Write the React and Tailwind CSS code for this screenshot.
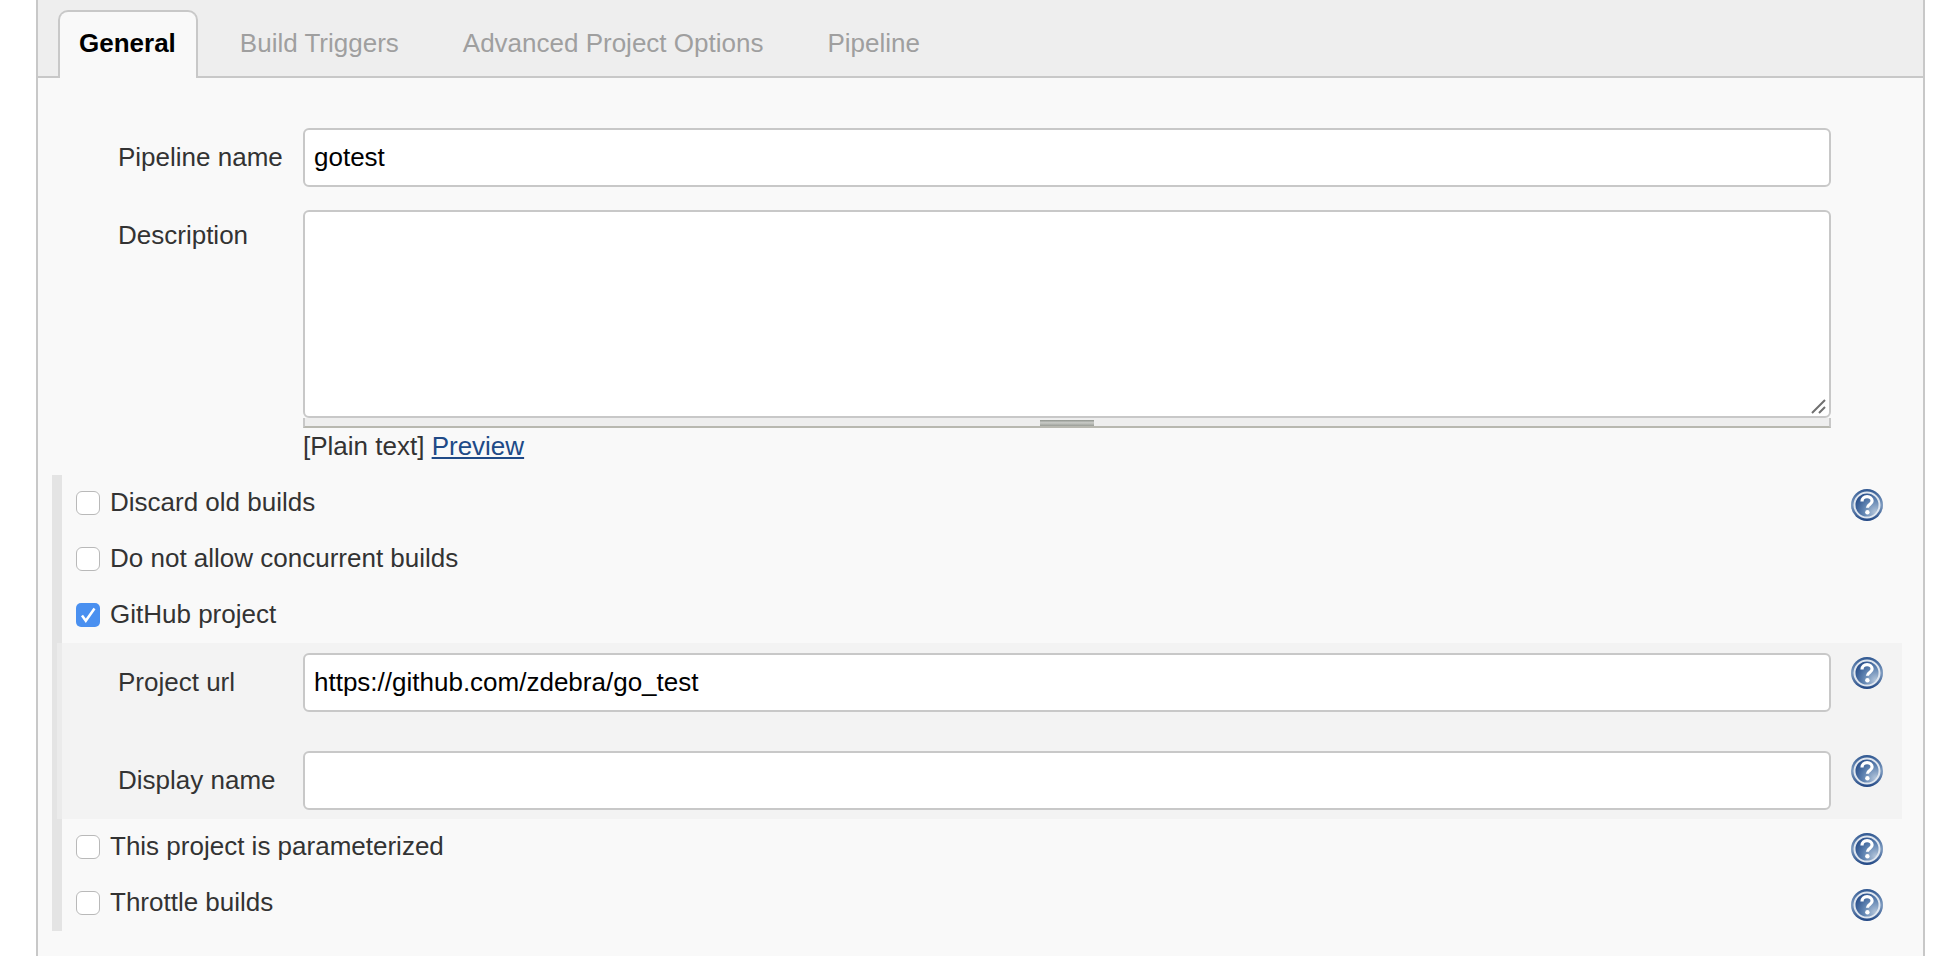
const FONT = "font-['Liberation_Sans',Arial,sans-serif]"

// Round blue help button
function HelpIcon() {
  return (
    <svg width="32" height="32" viewBox="0 0 32 32" className="block">
      <defs>
        <radialGradient id="helpFill" cx="0.85" cy="0.8" r="1">
          <stop offset="0" stopColor="#b4c6db" />
          <stop offset="0.5" stopColor="#5f83b1" />
          <stop offset="1" stopColor="#1f4583" />
        </radialGradient>
        <linearGradient id="helpEdge" x1="0" y1="0" x2="0" y2="1">
          <stop offset="0" stopColor="#2f5791" />
          <stop offset="0.5" stopColor="#7f9cc0" />
          <stop offset="1" stopColor="#1f4583" />
        </linearGradient>
      </defs>
      <circle cx="16" cy="16" r="16" fill="url(#helpEdge)" />
      <circle cx="16" cy="16" r="12.5" fill="url(#helpFill)" stroke="#dfe6ef" strokeWidth="2" />
      <path d="M11 12.5c0-3 2.200-4.800 5.100-4.800 2.900 0 5 1.800 5 4.300 0 3.500-4.700 3.500-4.700 6.800" fill="none" stroke="#fff" strokeWidth="3.200" />
      <circle cx="16.400" cy="23.300" r="2.200" fill="#fff" />
    </svg>
  )
}

function Checkbox({ checked }) {
  if (checked) {
    return (
      <span className="flex w-6 h-6 shrink-0 items-center justify-center rounded-[5px] bg-[#4a90f0]">
        <svg width="16" height="16" viewBox="0 0 16 16">
          <path d="M2 8.500l3.800 5.300L14.500 1.500" fill="none" stroke="#fff" strokeWidth="2.500" />
        </svg>
      </span>
    )
  }
  return <span className="block w-6 h-6 shrink-0 rounded-[6px] border border-[#b9b9b9] bg-white" />
}

function CheckRow({ label, checked, help, iconOffset }) {
  return (
    <div className="flex items-center h-[56px] pl-[14px] pr-[40px]">
      <Checkbox checked={checked} />
      <span className="ml-[10px] -mt-[2px] text-[26px] text-[#333]">{label}</span>
      {help && (
        <span className={`ml-auto ${iconOffset}`}>
          <HelpIcon />
        </span>
      )}
    </div>
  )
}

function TextInput({ value }) {
  return (
    <input
      readOnly
      value={value}
      className="w-[1528px] h-[59px] rounded-[6px] border-2 border-[#c8c8c8] bg-white px-[9px] text-[26px] text-black outline-none"
    />
  )
}

function NestedField({ label, value, className = '' }) {
  return (
    <div className={`flex items-center pl-[56px] pr-[19px] ${className}`}>
      <span className="w-[185px] shrink-0 text-[26px] text-[#333]">{label}</span>
      <TextInput value={value} />
      <span className="ml-[20px] -mt-[19px]">
        <HelpIcon />
      </span>
    </div>
  )
}

export default function App() {
  return (
    <div className={`h-[956px] overflow-hidden bg-white pl-[36px] pr-[35px] ${FONT}`}>
      <div className="h-full border-x-2 border-[#c8c8c8] bg-[#f9f9f9]">

        {/* Tabs */}
        <div className="flex h-[78px] items-end border-b-2 border-[#c8c8c8] bg-[#eeeeee] pl-[20px]">
          <div className="-mb-[2px] flex h-[68px] items-center rounded-t-[10px] border-2 border-b-0 border-[#c8c8c8] bg-[#f9f9f9] pl-[19px] pr-[20px] pb-[3px] text-[26px] font-bold text-black">
            General
          </div>
          <div className="ml-[10px] flex h-[66px] items-center gap-[64px] px-[32px] text-[26px] text-[#9f9f9f]">
            <span>Build Triggers</span>
            <span>Advanced Project Options</span>
            <span>Pipeline</span>
          </div>
        </div>

        {/* Name + description */}
        <div className="flex items-center pl-[80px] pt-[50px]">
          <span className="w-[185px] shrink-0 text-[26px] text-[#333]">Pipeline name</span>
          <TextInput value="gotest" />
        </div>
        <div className="flex pl-[80px] pt-[23px]">
          <span className="w-[185px] shrink-0 pt-[6px] text-[26px] text-[#333]">Description</span>
          <div className="w-[1528px]">
            <div className="relative h-[208px]">
              <textarea readOnly className="block h-full w-full resize-none rounded-[6px] border-2 border-[#c8c8c8] bg-white outline-none" />
              <svg width="18" height="18" viewBox="0 0 18 18" className="absolute bottom-[2px] right-[3px]">
                <path d="M2 15L15 2M9 15l6-6" stroke="#707070" strokeWidth="2" />
              </svg>
            </div>
            <div className="flex h-[10px] justify-center border-x-2 border-b-2 border-x-[#c8c8c8] border-b-[#b8b8b0] bg-[#eeeeee]">
              <div className="mt-[2px] h-[6px] w-[54px] bg-[linear-gradient(#8f938d,#c9cbc7_45%,#9a9d97)]" />
            </div>
            <div className="mt-[1px] text-[26px] leading-[34px] text-[#333]">
              [Plain text] <a href="#" className="text-[#204a87] underline">Preview</a>
            </div>
          </div>
        </div>

        {/* Options block */}
        <div className="ml-[14px] mt-[12px] h-[456px] border-l-[10px] border-[#e4e4e4]">
          <CheckRow label="Discard old builds" help iconOffset="mt-[4px]" />
          <CheckRow label="Do not allow concurrent builds" />
          <CheckRow label="GitHub project" checked />
          <div className="-ml-[5px] mr-[21px] flex h-[176px] flex-col border-l-[5px] border-[#ebebeb] bg-[#f3f3f3] pt-[10px]">
            <NestedField label="Project url" value="https://github.com/zdebra/go_test" />
            <NestedField label="Display name" value="" className="mt-[39px]" />
          </div>
          <CheckRow label="This project is parameterized" help iconOffset="mt-[4px]" />
          <CheckRow label="Throttle builds" help iconOffset="mt-[4px]" />
        </div>
      </div>
    </div>
  )
}
